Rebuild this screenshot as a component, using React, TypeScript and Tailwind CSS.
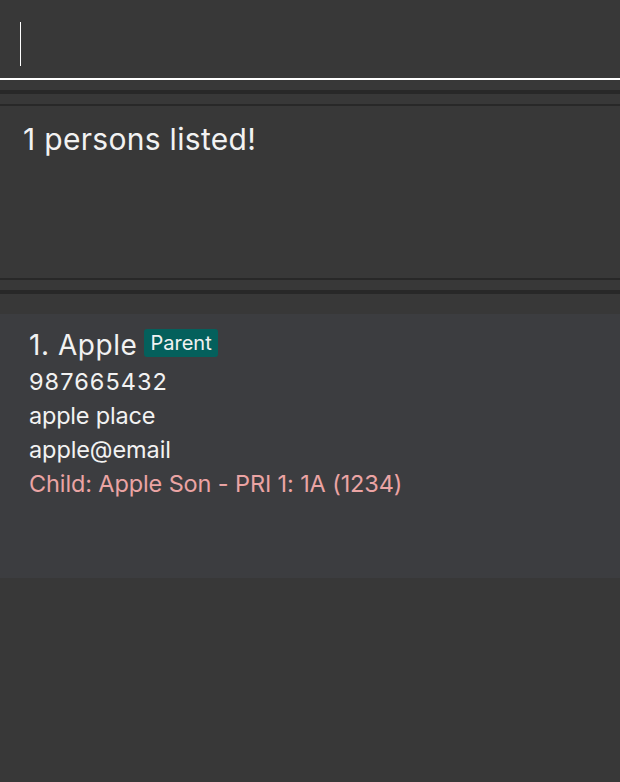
const details = [
  { text: '987665432', className: 'text-[#f2f2f2] tracking-[1.05px]' },
  { text: 'apple place', className: 'text-[#f2f2f2] tracking-[-0.2px]' },
  { text: 'apple@email', className: 'text-[#f2f2f2] tracking-[-0.1px]' },
  { text: 'Child: Apple Son - PRI 1: 1A (1234)', className: 'text-[#eba4a4] tracking-[-0.12px]' },
];

export default function App() {
  return (
    <div className="flex h-[782px] w-[620px] flex-col bg-[#383838] font-['Inter',sans-serif]">
      {/* command box */}
      <div className="h-[80px] border-b-2 border-white pl-[20px] pt-[22px]">
        <div className="h-[44px] w-px bg-white" />
      </div>

      <div className="mt-[10px] h-[4px] bg-[#282828]" />
      <div className="mt-[10px] h-[2px] bg-[#282828]" />

      {/* result display */}
      <div className="h-[172px] px-[23px] pt-[15px]">
        <p className="text-[30px] leading-[36px] font-[370] tracking-[0.3px] text-[#f2f2f2]">1 persons listed!</p>
      </div>

      <div className="h-[2px] bg-[#282828]" />
      <div className="mt-[10px] h-[4px] bg-[#282828]" />

      {/* person list */}
      <div className="mt-[20px] h-[264px] bg-[#3c3d40] px-[29px] pt-[13px]">
        <div className="mb-[2px] flex items-center gap-[7px]">
          <span className="text-[28px] leading-[36px] font-[370] tracking-[0.55px] text-[#f2f2f2]">1. Apple</span>
          <span className="-mt-[5px] rounded-[3px] bg-[#04605c] px-[6px] text-[20px] leading-[28px] font-[370] text-[#f2f2f2]">
            Parent
          </span>
        </div>
        {details.map((d) => (
          <p key={d.text} className={`text-[23.5px] leading-[34px] font-[370] ${d.className}`}>
            {d.text}
          </p>
        ))}
      </div>
    </div>
  );
}
